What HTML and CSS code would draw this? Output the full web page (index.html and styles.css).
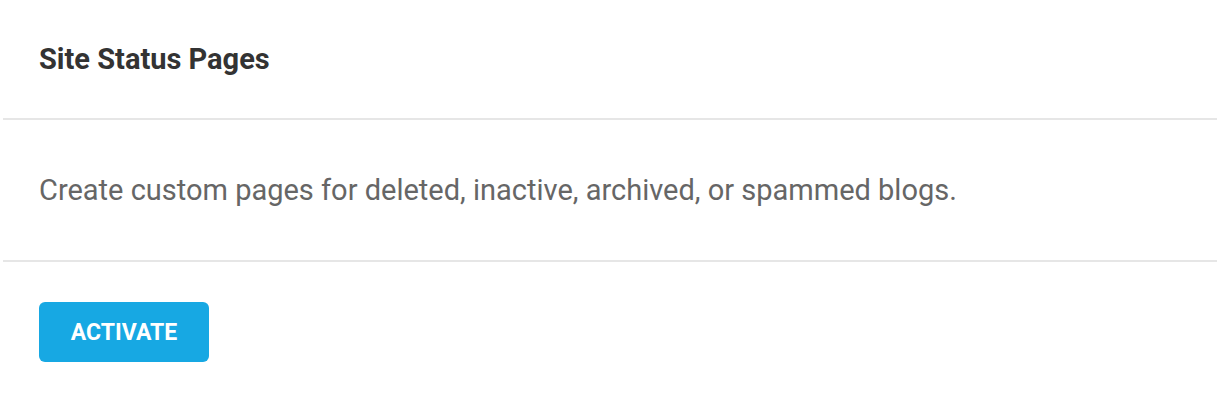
FILE: index.html
```html
<!DOCTYPE html>
<html>
<head>
    <meta charset="utf-8">
    <title>Site Status Pages</title>
    <link rel="stylesheet" href="styles.css">
</head>
<body>
<div class="box">
    <div class="box_header"><h2>Site Status Pages</h2></div>
    <div class="box_body">
        <p>Create custom pages for deleted, inactive, archived, or spammed blogs.</p>
    </div>
    <div class="box_footer">
        <button type="button" class="button_activate">Activate</button>
    </div>
</div>
</body>
</html>
```
FILE: styles.css
```css
body {
    margin: 0 3px;
    background: #fff;
    font-family: Roboto, "Liberation Sans", sans-serif;
}

.box_header {
    height: 118px;
    padding: 0 36px;
    display: flex;
    align-items: center;
    border-bottom: 2px solid #e6e6e6;
}

.box_header h2 {
    margin: 0;
    font-size: 29px;
    font-weight: 700;
    color: #333;
}

.box_body {
    height: 140px;
    padding: 0 36px;
    display: flex;
    align-items: center;
    border-bottom: 2px solid #e6e6e6;
}

.box_body p {
    margin: 0;
    font-size: 29px;
    color: #666;
}

.box_footer {
    padding: 40px 36px;
}

.button_activate {
    border: none;
    width: 170px;
    height: 60px;
    border-radius: 6px;
    background-color: #17a8e3;
    color: white;
    font: 700 23px Roboto, "Liberation Sans", sans-serif;
    text-transform: uppercase;
}
```
